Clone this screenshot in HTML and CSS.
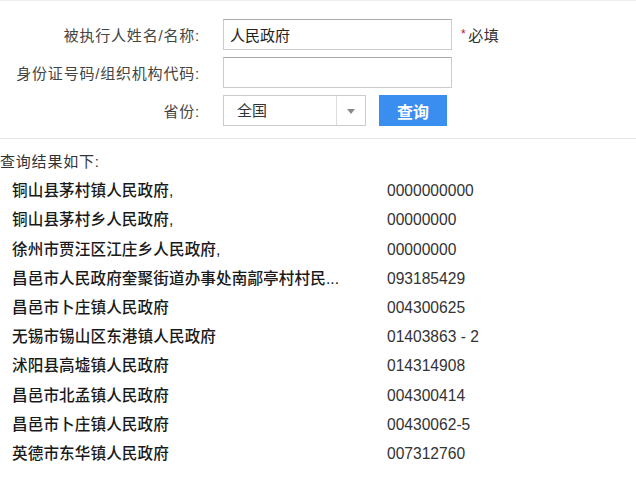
FILE: index.html
```html
<!DOCTYPE html>
<html lang="zh-CN">
<head>
  <meta charset="UTF-8">
  <title>被执行人查询</title>
  <link rel="stylesheet" href="styles.css">
</head>
<body>

<!-- 查询表单 -->
<form class="search-form">
  <div class="form-row">
    <label class="form-label" for="name">被执行人姓名/名称:</label>
    <input class="text-input" id="name" type="text" value="人民政府">
    <span class="required"><i>*</i>必填</span>
  </div>
  <div class="form-row">
    <label class="form-label" for="code">身份证号码/组织机构代码:</label>
    <input class="text-input" id="code" type="text">
  </div>
  <div class="form-row">
    <label class="form-label">省份:</label>
    <div class="select-box">
      <span class="select-value">全国</span>
      <span class="select-arrow"></span>
    </div>
    <button class="query-btn" type="button">查询</button>
  </div>
</form>

<!-- 查询结果 -->
<div class="results">
  <div class="results-title">查询结果如下:</div>
  <div class="result-row"><span class="result-name">铜山县茅村镇人民政府,</span><span class="result-code">0000000000</span></div>
  <div class="result-row"><span class="result-name">铜山县茅村乡人民政府,</span><span class="result-code">00000000</span></div>
  <div class="result-row"><span class="result-name">徐州市贾汪区江庄乡人民政府,</span><span class="result-code">00000000</span></div>
  <div class="result-row"><span class="result-name">昌邑市人民政府奎聚街道办事处南鄗亭村村民...</span><span class="result-code">093185429</span></div>
  <div class="result-row"><span class="result-name">昌邑市卜庄镇人民政府</span><span class="result-code">004300625</span></div>
  <div class="result-row"><span class="result-name">无锡市锡山区东港镇人民政府</span><span class="result-code">01403863 - 2</span></div>
  <div class="result-row"><span class="result-name">沭阳县高墟镇人民政府</span><span class="result-code">014314908</span></div>
  <div class="result-row"><span class="result-name">昌邑市北孟镇人民政府</span><span class="result-code">004300414</span></div>
  <div class="result-row"><span class="result-name">昌邑市卜庄镇人民政府</span><span class="result-code">00430062-5</span></div>
  <div class="result-row"><span class="result-name">英德市东华镇人民政府</span><span class="result-code">007312760</span></div>
</div>

</body>
</html>
```

FILE: styles.css
```css
body {
  margin: 0;
  font-family: "Liberation Sans", "Noto Sans CJK SC", sans-serif;
  font-size: 15px;
  color: #333;
  background: #fff;
  border-top: 1px solid #eee;
}
.search-form {
  padding-top: 18px;
  padding-bottom: 12px;
  border-bottom: 1px solid #e6e6e6;
}
.form-row {
  display: flex;
  align-items: center;
  height: 31px;
  margin-bottom: 7px;
}
.form-row:last-child {
  margin-bottom: 0;
}
.form-label {
  width: 200px;
  margin-right: 23px;
  text-align: right;
  color: #444;
  letter-spacing: 0.8px;
}
.text-input {
  box-sizing: border-box;
  width: 229px;
  height: 31px;
  padding: 0 6px;
  border: 1px solid #ccc;
  border-top-color: #aaa;
  font: inherit;
  font-size: 15px;
  color: #222;
  outline: none;
}
.required {
  margin-left: 9px;
  color: #333;
  letter-spacing: 0.5px;
}
.required i {
  font-style: normal;
  color: #c8102e;
  font-size: 12px;
  vertical-align: 3px;
  margin-right: 2px;
}
.select-box {
  box-sizing: border-box;
  display: flex;
  width: 143px;
  height: 31px;
  border: 1px solid #ccc;
}
.select-value {
  flex: 1;
  padding-left: 13px;
  line-height: 29px;
  color: #333;
}
.select-arrow {
  width: 28px;
  border-left: 1px solid #ddd;
  position: relative;
}
.select-arrow::after {
  content: "";
  position: absolute;
  left: 10px;
  top: 13px;
  border-left: 4px solid transparent;
  border-right: 4px solid transparent;
  border-top: 5px solid #888;
}
.query-btn {
  margin-left: 13px;
  width: 68px;
  height: 31px;
  border: none;
  background: #3a8ef0;
  color: #fff;
  font: inherit;
  font-size: 16px;
  font-weight: bold;
  cursor: pointer;
}
.results {
  padding-top: 8px;
}
.results-title {
  height: 29.2px;
  line-height: 29.2px;
  color: #333;
  letter-spacing: 0.8px;
}
.result-row {
  display: flex;
  height: 29.2px;
  line-height: 29.2px;
  padding-left: 12px;
  font-size: 15.6px;
}
.result-name {
  width: 375px;
  color: #1a1a1a;
  font-weight: 500;
  letter-spacing: 0.1px;
}
.result-code {
  color: #333;
  font-size: 15.6px;
}
```
